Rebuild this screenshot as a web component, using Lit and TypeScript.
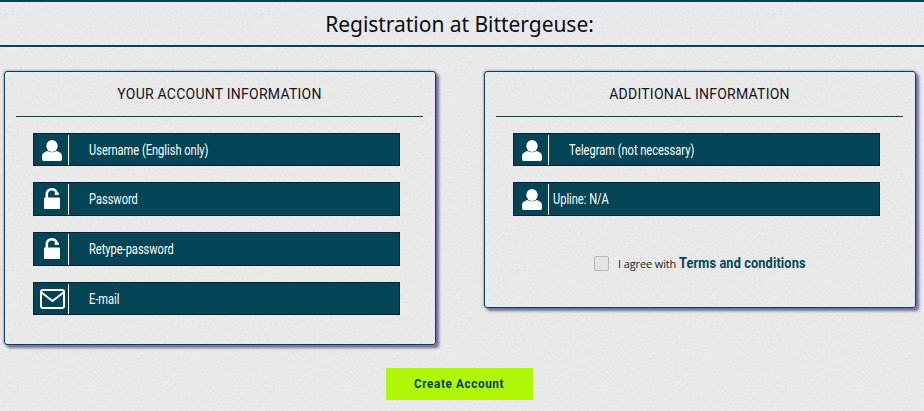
import { LitElement, html, css, svg } from "lit";
import { customElement } from "lit/decorators.js";

const texture = `url("data:image/svg+xml,%3Csvg xmlns='http://www.w3.org/2000/svg' width='256' height='256'%3E%3Cfilter id='n'%3E%3CfeTurbulence type='fractalNoise' baseFrequency='.35 .5' numOctaves='2' stitchTiles='stitch'/%3E%3CfeColorMatrix values='0 0 0 0 .5 0 0 0 0 .5 0 0 0 0 .5 0 0 0 .3 -.09'/%3E%3C/filter%3E%3Crect width='256' height='256' filter='url(%23n)'/%3E%3C/svg%3E")`;

const user = svg`<svg class="ic user" width="20" height="21" viewBox="0 0 20 21"><ellipse cx="10" cy="6" rx="5.700" ry="6" fill="#fff"/><path d="M1.500 21q-1.500 0-1.500-1.800v-3.200c0-2.800 3-4.300 5.500-5 2.800 1.700 6.200 1.700 9 0 2.500.7 5.500 2.200 5.500 5v3.200q0 1.800-1.500 1.800z" fill="#fff"/></svg>`;
const lock = svg`<svg class="ic lock" width="16" height="21" viewBox="0 0 16 21"><path d="M2.800 10V6C2.800 3 5 1.300 7.700 1.300c2.600 0 4.400 1.300 5 3.700" fill="none" stroke="#fff" stroke-width="2.600"/><rect x="10.800" y="4.500" width="4" height="2.500" fill="#fff"/><rect x="0" y="9.500" width="16" height="11.500" rx="1" fill="#fff"/></svg>`;
const mail = svg`<svg class="ic mail" width="25" height="20" viewBox="0 0 25 20"><rect x="1" y="1" width="23" height="18" rx="2" fill="none" stroke="#fff" stroke-width="2"/><path d="M1.500 3.500 12.500 12 23.500 3.500" fill="none" stroke="#fff" stroke-width="2"/></svg>`;

@customElement("app-root")
export class AppRoot extends LitElement {
  static styles = css`
    :host {
      display: block;
      width: 924px;
      height: 411px;
      overflow: hidden;
      background-color: #ececec;
      background-image: ${css([texture] as unknown as TemplateStringsArray)};
      font-family: "Roboto", sans-serif;
      color: #111;
    }
    .title {
      margin: 0;
      height: 42px;
      border-top: 2px solid #034557;
      border-bottom: 2px solid #034557;
      display: flex;
      align-items: center;
      justify-content: center;
      padding: 1px 5px 0 0;
      font: 400 21px/1 "Noto Sans", sans-serif;
      letter-spacing: -0.04px;
      color: #0b0b14;
    }
    .panels {
      display: flex;
      align-items: flex-start;
      gap: 48px;
      padding: 24px 8px 0 4px;
    }
    .panel {
      box-sizing: border-box;
      width: 432px;
      padding: 0 12px 0 11px;
      border: 1px solid #034557;
      border-radius: 3px;
      box-shadow: 3px 3px 3px #6f6f9c, 0 0 3px #77779f;
    }
    .left { height: 273.500px; }
    .right { height: 236.500px; }
    h2 {
      margin: 0;
      height: 45px;
      box-sizing: border-box;
      padding-top: 14px;
      border-bottom: 1px solid #034557;
      text-align: center;
      font: 400 14px/16px "Roboto", sans-serif;
      letter-spacing: 0.24px;
      color: #141420;
    }
    .rows {
      display: flex;
      flex-direction: column;
      gap: 16px;
      padding: 16px 23px 0 17px;
    }
    .row {
      box-sizing: border-box;
      height: 34px;
      display: flex;
      align-items: stretch;
      background: #034557;
      border: 1px solid #101f3a;
      color: #fff;
      font: 400 14px/1 "Roboto", sans-serif;
    }
    .short { height: 33px; }
    .icon {
      width: 34px;
      flex: none;
      display: flex;
      align-items: center;
      justify-content: center;
      border-right: 1px solid #fff;
      margin: 1px 0 0;
    }
    .ic { display: block; }
    .user { margin-left: 1px; }
    .lock { margin: 0 0 3px 2px; }
    .mail { margin-left: 3px; }
    .label {
      display: flex;
      align-items: center;
      padding-left: 20px;
    }
    .label.tight { padding-left: 4px; }
    .label span {
      display: inline-block;
      white-space: nowrap;
      transform: scaleX(0.79);
      transform-origin: left center;
    }
    .agree {
      display: flex;
      align-items: center;
      margin: 37px 0 0 98px;
      height: 20px;
    }
    .box {
      box-sizing: border-box;
      width: 15px;
      height: 15px;
      background: #e4e4e4;
      border: 1px solid #b5b5b5;
      border-radius: 2px;
      margin-right: 9px;
    }
    .agree-text {
      font: 400 11px/1 "Open Sans", sans-serif;
      letter-spacing: -0.12px;
      color: #222;
    }
    .terms {
      display: inline-block;
      white-space: nowrap;
      margin-left: 3px;
      font: 700 15px/1 "Roboto", sans-serif;
      letter-spacing: 0.15px;
      transform: scaleX(0.85);
      transform-origin: left center;
      color: #034557;
    }
    .actions {
      display: flex;
      justify-content: center;
      padding-top: 23px;
      padding-right: 5px;
    }
    .btn {
      width: 147px;
      height: 32px;
      border: 0;
      padding: 0;
      background: #b0f607;
      color: #034557;
    }
    .btn span {
      display: inline-block;
      font: 700 13px/1 "Roboto", sans-serif;
      letter-spacing: 0.7px;
      transform: scaleX(0.9);
    }
  `;

  private row(icon: unknown, text: string, cls = "", labelCls = "") {
    return html`<div class="row ${cls}">
      <div class="icon">${icon}</div>
      <div class="label ${labelCls}"><span>${text}</span></div>
    </div>`;
  }

  render() {
    return html`
      <h1 class="title">Registration at Bittergeuse:</h1>
      <div class="panels">
        <section class="panel left">
          <h2>YOUR ACCOUNT INFORMATION</h2>
          <div class="rows">
            ${this.row(user, "Username (English only)", "short")}
            ${this.row(lock, "Password")}
            ${this.row(lock, "Retype-password")}
            ${this.row(mail, "E-mail", "short")}
          </div>
        </section>
        <section class="panel right">
          <h2>ADDITIONAL INFORMATION</h2>
          <div class="rows">
            ${this.row(user, "Telegram (not necessary)", "short")}
            ${this.row(user, "Upline: N/A", "", "tight")}
          </div>
          <div class="agree">
            <span class="box"></span>
            <span class="agree-text">I agree with</span>
            <span class="terms">Terms and conditions</span>
          </div>
        </section>
      </div>
      <div class="actions"><button class="btn"><span>Create Account</span></button></div>
    `;
  }
}
